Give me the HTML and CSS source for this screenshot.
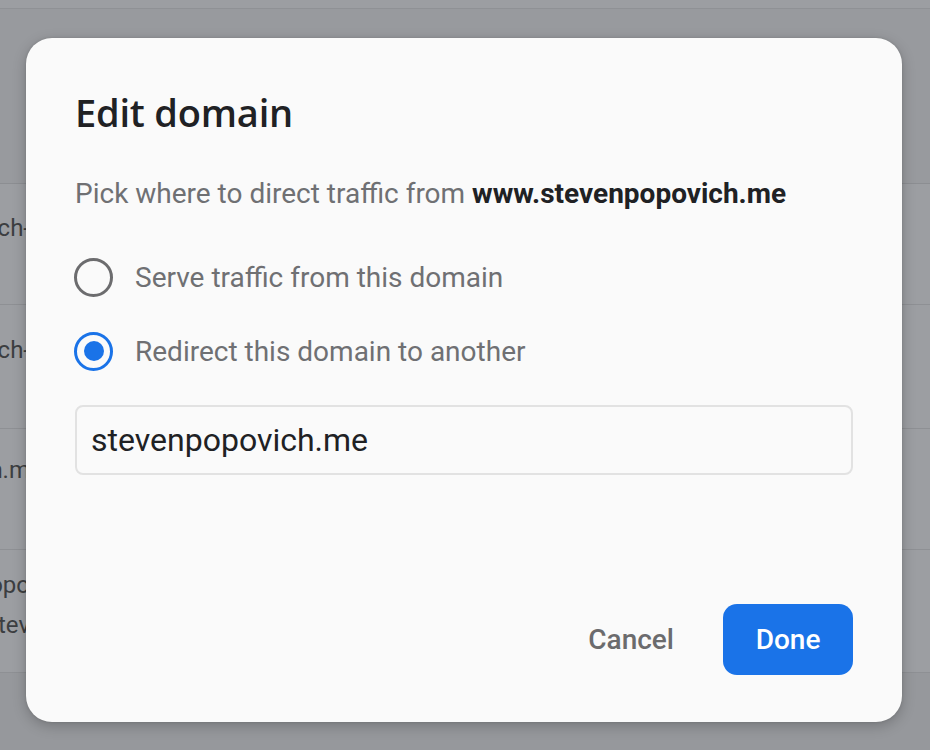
FILE: index.html
```html
<!DOCTYPE html>
<html>
<head>
<meta charset="utf-8">
<link rel="stylesheet" href="styles.css">
</head>
<body>
<div class="page">
  <div class="topbar"></div>
  <div class="header"></div>
  <div class="table">
    <div class="row r1"><div class="name"><span>stevenpopovich-</span></div></div>
    <div class="row r2"><div class="name"><span>stevenpopovich-</span></div></div>
    <div class="row r3"><div class="name"><span>stevenpopovich.m</span></div></div>
    <div class="row r4"><div class="name"><span>www.stevenpopo</span><span>stev</span></div></div>
  </div>
  <div class="footer"></div>
</div>

<div class="dialog">
  <h1 class="title">Edit domain</h1>
  <p class="desc">Pick where to direct traffic from <b>www.stevenpopovich.me</b></p>
  <div class="option first">
    <span class="radio"></span>
    <span class="label">Serve traffic from this domain</span>
  </div>
  <div class="option">
    <span class="radio checked"></span>
    <span class="label">Redirect this domain to another</span>
  </div>
  <div class="field">stevenpopovich.me</div>
  <div class="actions">
    <span class="btn cancel">Cancel</span>
    <span class="btn done">Done</span>
  </div>
</div>
</body>
</html>
```
FILE: styles.css
```css
html, body {
  margin: 0;
  padding: 0;
}
body {
  width: 930px;
  height: 750px;
  overflow: hidden;
  position: relative;
  background: #999b9f;
  font-family: Roboto, "Liberation Sans", sans-serif;
}
.page {
  display: flex;
  flex-direction: column;
  height: 750px;
}
.topbar {
  height: 8px;
  background: #9c9ea2;
  border-bottom: 1px solid #8f9195;
}
.header {
  height: 174px;
  background: #989a9e;
  border-bottom: 1px solid #8c8e92;
}
.table {
  display: flex;
  flex-direction: column;
  background: #9c9ea2;
}
.row {
  border-bottom: 1px solid #8e9094;
  box-sizing: border-box;
  display: flex;
}
.r1 { height: 121px; padding-top: 24px; }
.r2 { height: 124px; padding-top: 25px; }
.r3 { height: 121px; padding-top: 21px; }
.r4 { height: 123px; padding-top: 15px; }
.name {
  width: 30px;
  overflow: hidden;
  display: flex;
  flex-direction: column;
  align-items: flex-end;
  white-space: nowrap;
}
.name span {
  font-size: 24px;
  color: #3c3e41;
  line-height: 40px;
}
.footer {
  flex: 1;
  background: #96989c;
}
.dialog {
  position: absolute;
  left: 26px;
  top: 38px;
  width: 876px;
  height: 684px;
  box-sizing: border-box;
  background: #fafafa;
  border-radius: 26px;
  box-shadow: 0 4px 14px rgba(0,0,0,0.22), 0 0 3px rgba(0,0,0,0.12);
  padding: 50px 49px 47px 49px;
  display: flex;
  flex-direction: column;
}
.title {
  margin: 0;
  font-family: "Open Sans", Roboto, sans-serif;
  font-weight: 600;
  font-size: 38px;
  line-height: 48px;
  color: #202124;
  letter-spacing: -0.2px;
}
.desc {
  margin: 40px 0 0 0;
  font-size: 28px;
  line-height: 36px;
  color: #6f7073;
}
.desc b {
  color: #202124;
  font-weight: 700;
}
.option {
  display: flex;
  align-items: center;
  height: 40px;
  margin-top: 34px;
}
.option.first { margin-top: 45px; }
.radio {
  width: 39px;
  height: 39px;
  flex: none;
  box-sizing: border-box;
  border: 3.5px solid #6c6c6e;
  border-radius: 50%;
  margin-left: -1px;
  margin-right: 22px;
  display: flex;
  align-items: center;
  justify-content: center;
}
.radio.checked {
  border-color: #1a73e8;
}
.radio.checked::after {
  content: "";
  width: 20px;
  height: 20px;
  border-radius: 50%;
  background: #1a73e8;
}
.label {
  font-size: 28px;
  color: #6f7073;
}
.field {
  margin-top: 34px;
  height: 70px;
  box-sizing: border-box;
  border: 2px solid #e2e2e2;
  border-radius: 8px;
  display: flex;
  align-items: center;
  padding-left: 14px;
  font-size: 32px;
  color: #202124;
}
.actions {
  margin-top: auto;
  display: flex;
  justify-content: flex-end;
  align-items: center;
  gap: 22px;
}
.btn {
  font-size: 28px;
  font-weight: 500;
  height: 71px;
  display: flex;
  align-items: center;
  justify-content: center;
  border-radius: 14px;
}
.cancel {
  color: #6b6b6d;
  padding: 0 27px;
}
.done {
  background: #1a73e8;
  color: #ffffff;
  width: 130px;
}
```
